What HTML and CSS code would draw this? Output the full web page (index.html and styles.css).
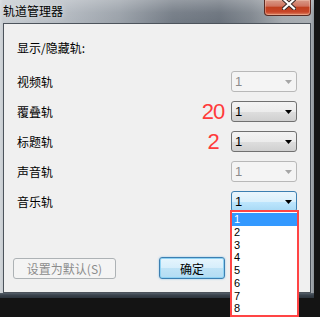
FILE: index.html
```html
<!DOCTYPE html>
<html>
<head>
<meta charset="utf-8">
<link rel="stylesheet" href="styles.css">
</head>
<body>
<div class="screen">
  <div class="window">
    <div class="titlebar">
      <span class="title">轨道管理器</span>
      <div class="close">
        <svg width="14" height="11" viewBox="0 0 14 11">
          <path d="M2 0.5 L12 9.5 M12 0.5 L2 9.5" stroke="#3a2a28" stroke-width="4.2" stroke-linecap="square" fill="none"/>
          <path d="M2 0.5 L12 9.5 M12 0.5 L2 9.5" stroke="#ffffff" stroke-width="2.2" stroke-linecap="square" fill="none"/>
        </svg>
      </div>
    </div>
    <div class="panel">
      <div class="heading">显示/隐藏轨:</div>
      <div class="rows">
        <div class="row">
          <span class="label">视频轨</span>
          <span class="note"></span>
          <div class="combo disabled"><span class="val">1</span><svg class="arrow" width="7" height="4" viewBox="0 0 7 4"><path d="M0 0H7L3.5 4Z"/></svg></div>
        </div>
        <div class="row">
          <span class="label">覆叠轨</span>
          <span class="note">20</span>
          <div class="combo"><span class="val">1</span><svg class="arrow" width="7" height="4" viewBox="0 0 7 4"><path d="M0 0H7L3.5 4Z"/></svg></div>
        </div>
        <div class="row">
          <span class="label">标题轨</span>
          <span class="note">2</span>
          <div class="combo"><span class="val">1</span><svg class="arrow" width="7" height="4" viewBox="0 0 7 4"><path d="M0 0H7L3.5 4Z"/></svg></div>
        </div>
        <div class="row">
          <span class="label">声音轨</span>
          <span class="note"></span>
          <div class="combo disabled"><span class="val">1</span><svg class="arrow" width="7" height="4" viewBox="0 0 7 4"><path d="M0 0H7L3.5 4Z"/></svg></div>
        </div>
        <div class="row">
          <span class="label">音乐轨</span>
          <span class="note"></span>
          <div class="combo active"><span class="val">1</span><svg class="arrow" width="7" height="4" viewBox="0 0 7 4"><path d="M0 0H7L3.5 4Z"/></svg></div>
        </div>
      </div>
      <div class="buttons">
        <div class="btn btn-disabled">设置为默认(S)</div>
        <div class="btn btn-default">确定</div>
      </div>
    </div>
    <div class="bottom-frame"></div>
  </div>
  <div class="droplist">
    <div class="item selected">1</div>
    <div class="item">2</div>
    <div class="item">3</div>
    <div class="item">4</div>
    <div class="item">5</div>
    <div class="item">6</div>
    <div class="item">7</div>
    <div class="item">8</div>
  </div>
</div>
</body>
</html>
```

FILE: styles.css
```css
html, body {
  margin: 0;
  padding: 0;
  background: #141414;
}

.screen {
  position: relative;
  width: 314px;
  height: 317px;
  overflow: hidden;
  background: #141414;
  font-family: "Noto Sans CJK SC", "Noto Sans", sans-serif;
  font-size: 12px;
  color: #000;
}

.window {
  width: 314px;
  height: 298px;
  display: flex;
  flex-direction: column;
  background: linear-gradient(90deg, #d3d7db 0%, #c6cbd0 1%, #bfc5cb 8%, #b4bac1 20%, #9aa1a9 38%, #737b85 55%, #6a727c 70%, #7f868e 80%, #a4a9ae 90%, #a8adb2 99%, #8c9298 100%);
}

.titlebar {
  height: 23px;
  flex: none;
  display: flex;
  align-items: flex-start;
  justify-content: space-between;
  background: linear-gradient(180deg, rgba(255,255,255,0.25) 0%, rgba(255,255,255,0.05) 55%, rgba(255,255,255,0) 100%);
}

.title {
  margin: 3px 0 0 3px;
  font-size: 12px;
  line-height: 16px;
  color: #000;
  text-shadow: 0 0 6px rgba(255,255,255,0.7);
}

.close {
  width: 45px;
  height: 15px;
  margin-right: 3px;
  border: 1px solid #5a2a22;
  border-top: none;
  border-radius: 0 0 4px 4px;
  background: linear-gradient(180deg, #d89a88 0%, #cf7460 40%, #c0401f 50%, #c84528 80%, #e08a6a 100%);
  box-shadow: inset 0 0 0 1px rgba(255,220,200,0.35);
  display: flex;
  align-items: flex-start;
  justify-content: center;
}

.close svg {
  display: block;
  margin: -1px 0 0 2px;
}

.panel {
  height: 270px;
  margin: 0 3px;
  box-sizing: border-box;
  border: 1px solid #4d545c;
  background: #f0f0f0;
  padding: 16px 13px 0 13px;
  display: flex;
  flex-direction: column;
}

.heading {
  line-height: 16px;
  height: 16px;
}

.rows {
  margin-top: 15px;
  display: flex;
  flex-direction: column;
  gap: 9px;
}

.row {
  height: 21px;
  display: flex;
  align-items: center;
}

.label {
  flex: 1;
  line-height: 16px;
}

.note {
  width: 28px;
  margin-right: 4px;
  text-align: center;
  color: #ff3b3b;
  font-family: "Liberation Sans", Arial, sans-serif;
  font-size: 22px;
  line-height: 21px;
  letter-spacing: -1px;
}

.combo {
  width: 66px;
  height: 21px;
  box-sizing: border-box;
  border: 1px solid #707070;
  border-radius: 3px;
  background: linear-gradient(180deg, #f3f3f3 0%, #ececec 50%, #dedede 51%, #d0d0d0 100%);
  display: flex;
  align-items: center;
  justify-content: space-between;
  padding: 0 4px 0 3px;
  font-family: "Liberation Sans", Arial, sans-serif;
  font-size: 13px;
  color: #000;
}

.combo .val {
  line-height: 15px;
}

.combo .arrow {
  display: block;
  fill: #000;
}

.combo.disabled {
  border-color: #b8b8b8;
  background: #f4f4f4;
  color: #8c8c8c;
}

.combo.disabled .arrow {
  fill: #a7a7a7;
}

.combo.active {
  border-color: #3c7fb1;
  background: linear-gradient(180deg, #eaf6fd 0%, #d9f0fc 50%, #bee6fd 51%, #a7d9f5 100%);
}

.buttons {
  margin-top: 45px;
  margin-left: -4px;
  display: flex;
  align-items: flex-end;
}

.btn {
  box-sizing: border-box;
  border-radius: 3px;
  display: flex;
  align-items: center;
  justify-content: center;
  font-size: 12px;
}

.btn-disabled {
  width: 103px;
  height: 21px;
  border: 1px solid #adb2b5;
  background: #f4f4f4;
  color: #8c8c8c;
}

.btn-default {
  width: 66px;
  height: 22px;
  margin-left: 43px;
  border: 1px solid #3c7fb1;
  background: linear-gradient(180deg, #e6f5fd 0%, #d6eefb 50%, #bfe3f6 51%, #b3dcf3 100%);
  box-shadow: inset 0 0 0 1px #8fd2f3, 0 0 2px rgba(60,160,230,0.6);
  color: #000;
}

.bottom-frame {
  height: 5px;
  flex: none;
  background: linear-gradient(180deg, #56606a 0%, #3a434d 40%, #2c343c 100%);
}

.droplist {
  position: absolute;
  left: 230px;
  top: 210px;
  width: 69px;
  height: 107px;
  box-sizing: border-box;
  border: 2px solid #ff4545;
  background: #fff;
  padding-top: 1px;
  font-family: "Liberation Sans", Arial, sans-serif;
  font-size: 11px;
  color: #000;
}

.item {
  height: 12.75px;
  line-height: 12.75px;
  padding-left: 2px;
}

.item.selected {
  background: #3399ff;
  color: #fff;
}
```
